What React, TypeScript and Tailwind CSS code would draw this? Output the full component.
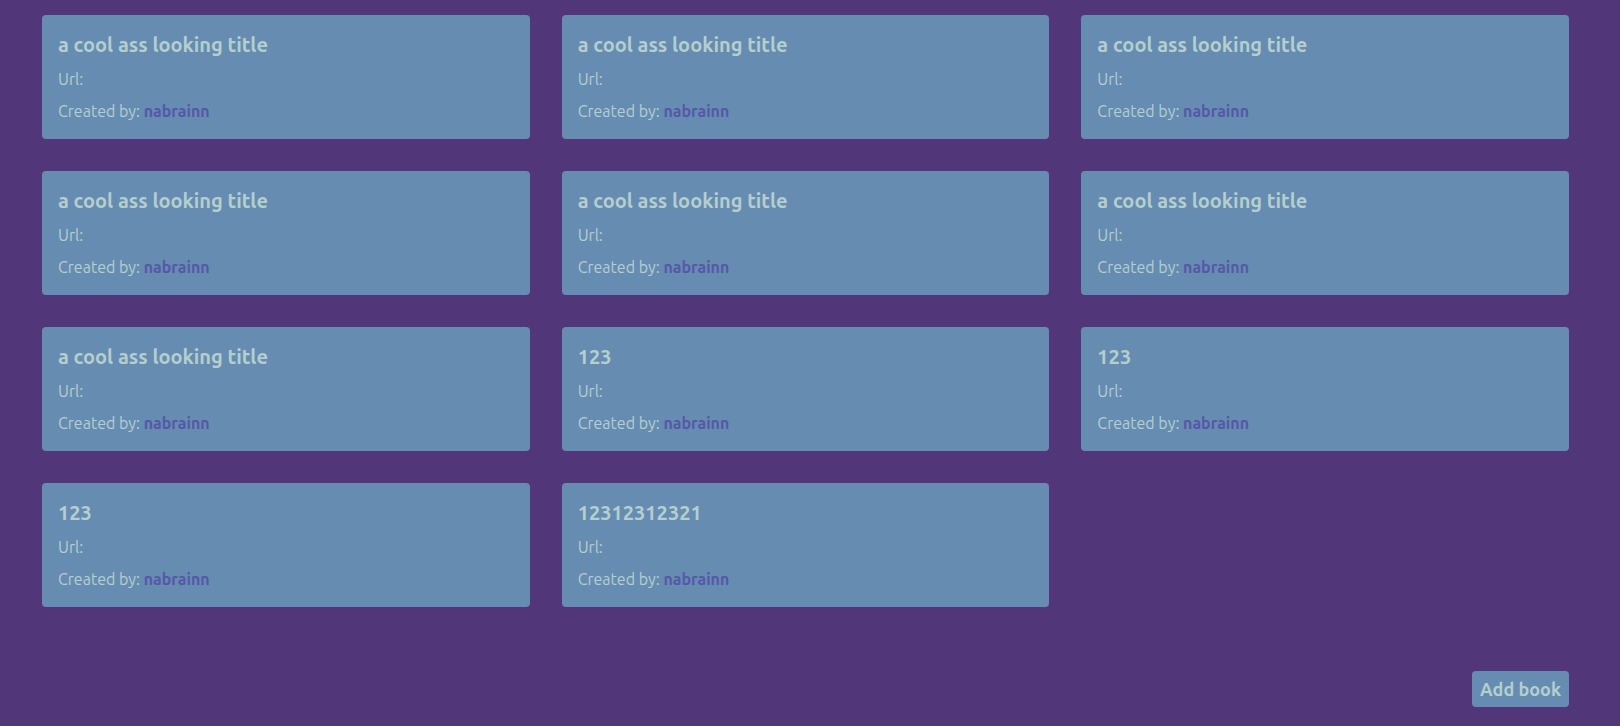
const titles = [
  ...Array<string>(7).fill("a cool ass looking title"),
  "123",
  "123",
  "123",
  "12312312321",
];

function BookCard({ title }: { title: string }) {
  return (
    <article className="flex flex-col gap-2 rounded bg-[#678cb1] p-4">
      <h2 className="text-xl font-semibold">{title}</h2>
      <p>Url:</p>
      <p>
        Created by:{" "}
        <a href="#nabrainn" className="font-semibold text-[#5558a8]">
          nabrainn
        </a>
      </p>
    </article>
  );
}

export default function App() {
  return (
    <main className="flex min-h-screen flex-col gap-16 bg-[#513679] pt-[15px] pr-[51px] pb-4 pl-[42px] font-['Ubuntu','Noto_Sans',sans-serif] text-base text-[#b4cfce]">
      <section className="grid grid-cols-3 gap-8">
        {titles.map((title, index) => (
          <BookCard key={index} title={title} />
        ))}
      </section>
      <button type="button" className="self-end rounded bg-[#678cb1] px-2 py-1 text-lg font-semibold">
        Add book
      </button>
    </main>
  );
}
